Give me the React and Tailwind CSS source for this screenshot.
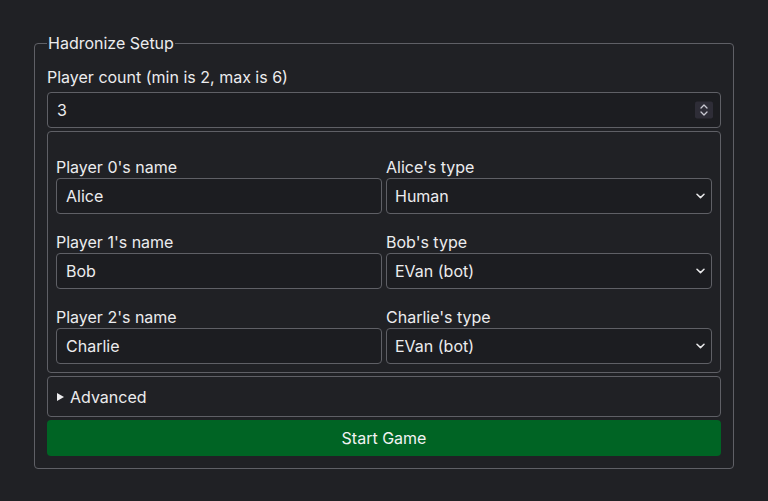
import React, { useState } from 'react';

const players = [
  { name: 'Alice', type: 'Human' },
  { name: 'Bob', type: 'EVan (bot)' },
  { name: 'Charlie', type: 'EVan (bot)' },
];

function Chevron() {
  return (
    <svg width="9" height="6" viewBox="0 0 9 6" className="pointer-events-none absolute right-[7px] top-1/2 -translate-y-1/2">
      <path d="M1 1.2 L4.5 4.6 L8 1.2" fill="none" stroke="#e8e8ea" strokeWidth="1.5" strokeLinecap="round" strokeLinejoin="round" />
    </svg>
  );
}

function TypeSelect({ value }) {
  return (
    <div className="relative">
      <select
        defaultValue={value}
        className="h-[36px] w-full appearance-none rounded-[4px] border border-[#5f6066] bg-[#1c1d21] pl-[8px] pr-6 text-[16px] text-[#ececee] outline-none"
      >
        <option>Human</option>
        <option>EVan (bot)</option>
      </select>
      <Chevron />
    </div>
  );
}

export default function App() {
  const [count] = useState(3);

  return (
    <div className="min-h-[501px] bg-[#202125] px-[34px] pt-[33px] pb-[32px] text-[#ececee] font-['Inter','Noto_Sans',sans-serif] text-[16px] leading-5">
      <fieldset className="rounded-[4px] border border-[#5f6066] px-[12px] pt-[14px] pb-[12px]">
        <legend className="px-[1px] text-[16px] leading-5">Hadronize Setup</legend>
        <div className="flex flex-col gap-[3px]">
          <div className="flex flex-col gap-[5px]">
            <label className="leading-5">Player count (min is 2, max is 6)</label>
            <div className="relative">
              <input
                type="text"
                defaultValue={count}
                className="h-[36px] w-full rounded-[4px] border border-[#5f6066] bg-[#1c1d21] px-[9px] text-[16px] text-[#ececee] outline-none"
              />
              <span className="pointer-events-none absolute right-[8px] top-1/2 flex h-[17px] w-[18px] -translate-y-1/2 flex-col items-center justify-center rounded-[2px] bg-[#2e2d37]">
                <svg width="8" height="13" viewBox="0 0 8 13">
                  <path d="M1 4.5 L4 1.5 L7 4.5" fill="none" stroke="#c9c8d2" strokeWidth="1.3" strokeLinecap="round" strokeLinejoin="round" />
                  <path d="M1 8.5 L4 11.5 L7 8.5" fill="none" stroke="#c9c8d2" strokeWidth="1.3" strokeLinecap="round" strokeLinejoin="round" />
                </svg>
              </span>
            </div>
          </div>

          <div className="rounded-[4px] border border-[#5f6066] px-[8px] pt-[25px] pb-[8px]">
            <div className="flex flex-col gap-[18px]">
              {players.map((p, i) => (
                <div key={i} className="grid grid-cols-2 gap-x-1">
                  <div className="flex flex-col gap-[1px]">
                    <label className="leading-5">Player {i}'s name</label>
                    <input
                      type="text"
                      defaultValue={p.name}
                      className="h-[36px] w-full rounded-[4px] border border-[#5f6066] bg-[#1c1d21] px-[9px] text-[16px] text-[#ececee] outline-none"
                    />
                  </div>
                  <div className="flex flex-col gap-[1px]">
                    <label className="leading-5">{p.name}'s type</label>
                    <TypeSelect value={p.type} />
                  </div>
                </div>
              ))}
            </div>
          </div>

          <div className="flex h-[41px] items-center gap-[6px] rounded-[4px] border border-[#5f6066] px-[9px]">
            <svg width="7" height="8" viewBox="0 0 7 8">
              <path d="M0 0 L7 4 L0 8 Z" fill="#ececee" />
            </svg>
            <span>Advanced</span>
          </div>

          <button className="h-[36px] w-full rounded-[4px] bg-[#006424] text-[16px] text-[#f2f2f2]">
            Start Game
          </button>
        </div>
      </fieldset>
    </div>
  );
}
